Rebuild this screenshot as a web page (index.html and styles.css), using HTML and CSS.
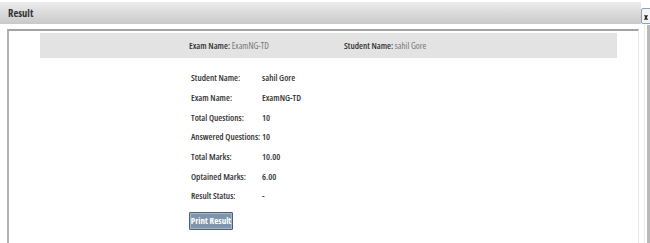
FILE: index.html
```html
<!DOCTYPE html>
<html>
<head>
<meta charset="utf-8">
<link rel="stylesheet" href="styles.css">
</head>
<body>
<div class="dialog">
  <div class="titlebar"><span class="title">Result</span></div>
  <button class="close">x</button>
  <div class="content">
    <div class="box">
      <div class="band">
        <div class="band-item"><b>Exam Name:</b> <span class="muted">ExamNG-TD</span></div>
        <div class="band-item"><b>Student Name:</b> <span class="muted">sahil Gore</span></div>
      </div>
      <div class="details">
        <div class="label">Student Name:</div><div class="value">sahil Gore</div>
        <div class="label">Exam Name:</div><div class="value">ExamNG-TD</div>
        <div class="label">Total Questions:</div><div class="value">10</div>
        <div class="label">Answered Questions:</div><div class="value">10</div>
        <div class="label">Total Marks:</div><div class="value">10.00</div>
        <div class="label">Optained Marks:</div><div class="value">6.00</div>
        <div class="label">Result Status:</div><div class="value">-</div>
      </div>
      <button class="print">Print Result</button>
    </div>
  </div>
  <div class="scrollstrip"></div>
</div>
</body>
</html>
```

FILE: styles.css
```css
* { box-sizing: border-box; }
html, body {
  margin: 0;
  padding: 0;
  background: #ffffff;
  width: 650px;
  height: 243px;
  overflow: hidden;
  font-family: "Open Sans", "Liberation Sans", sans-serif;
  font-stretch: 75%;
  color: #333333;
}
.dialog {
  position: relative;
  width: 650px;
  height: 243px;
  padding-top: 2px;
}
.titlebar {
  width: 641px;
  height: 22px;
  background: linear-gradient(#ececec, #c9c9c9);
  display: flex;
  align-items: center;
  padding-left: 8px;
}
.title {
  font-weight: 700;
  font-size: 10.5px;
  color: #333333;
}
.close {
  position: absolute;
  left: 641px;
  top: 8px;
  width: 12px;
  height: 16px;
  padding: 0 0 0 2px;
  border: 1px solid #8ea3bb;
  border-radius: 2px;
  background: #f4f4f4;
  font-family: "Open Sans", sans-serif;
  font-stretch: 75%;
  font-weight: 700;
  font-size: 9px;
  line-height: 13px;
  text-align: left;
  color: #111;
}
.content {
  padding: 5px 0 0 7px;
  height: 219px;
}
.box {
  width: 632px;
  height: 100%;
  border-left: 2px solid #b3b3b3;
  border-top: 2px solid #a3a3a3;
  border-right: 1px solid #e8e8e8;
  padding-top: 2px;
}
.band {
  margin-left: 31px;
  width: 577px;
  height: 25px;
  background: #e3e3e3;
  display: flex;
  align-items: center;
  padding-left: 149px;
  font-size: 9px;
}
.band-item { width: 155px; white-space: nowrap; }
.band b { font-weight: 600; color: #333; }
.muted { color: #777; }
.details {
  margin: 10px 0 0 182px;
  display: grid;
  grid-template-columns: 71px auto;
  grid-auto-rows: 19.7px;
  align-items: center;
  font-size: 9px;
  font-weight: 600;
  white-space: nowrap;
}
.label { color: #333; }
.value { color: #333; }
.print {
  margin: 6px 0 0 180px;
  width: 44px;
  height: 18px;
  padding: 0;
  background: #7e95ab;
  border: 1px solid #4b6075;
  border-radius: 1px;
  color: #ffffff;
  font-family: "Open Sans", sans-serif;
  font-stretch: 75%;
  font-weight: 700;
  font-size: 9px;
  box-shadow: inset 0 0 0 1px #a6b8c8;
}
.scrollstrip {
  position: absolute;
  left: 644px;
  top: 25px;
  width: 6px;
  height: 218px;
  border-left: 1px solid #ececec;
  border-right: 3px solid #b9b9b9;
}
```
